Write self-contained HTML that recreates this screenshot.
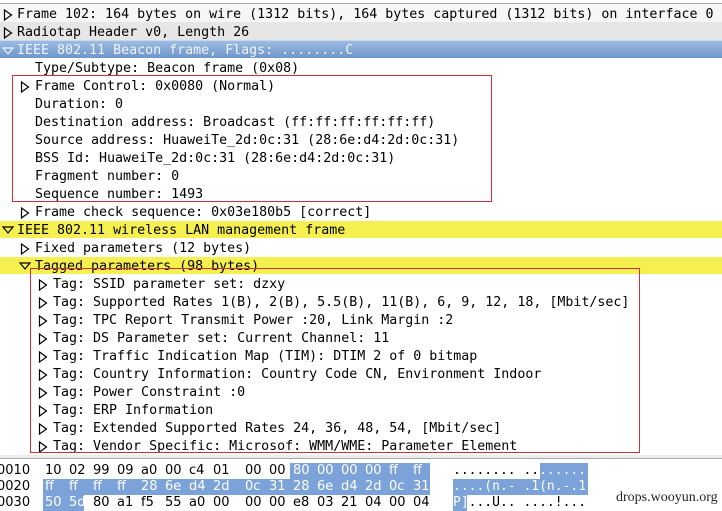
<!DOCTYPE html>
<html><head><meta charset="utf-8"><style>
*{margin:0;padding:0;box-sizing:border-box}
body{width:722px;height:510px;background:#fff;position:relative;overflow:hidden;font-family:"DejaVu Sans Mono","Liberation Mono",monospace;font-size:13.3px;color:#000}
.r{position:absolute;left:0;width:722px;height:18px;line-height:22px;white-space:pre}
.t{position:absolute;top:5px}
.box{position:absolute;border:1px solid #d0303a}
.hx{position:absolute;font-family:"DejaVu Sans",sans-serif;font-size:13px;height:16px;line-height:16px;white-space:pre}
.hx i{font-style:normal;display:inline-block;width:24px}
.hx i.g{width:32px}
.asc{position:absolute;font-family:"DejaVu Sans Mono",monospace;font-size:13px;height:16px;line-height:16px;white-space:pre}
</style></head><body>
<div style="position:absolute;left:0;top:0;width:722px;height:4px;background:#fff;border-bottom:1px solid #aaa"></div>

<div class="r" style="top:4px;background:#f6f6f6"><svg class="t" style="left:3px" width="10" height="12"><path d="M1.5 1 L8.5 6 L1.5 11 Z" fill="none" stroke="#000" stroke-width="1.2"/></svg><span style="position:absolute;left:17px">Frame 102: 164 bytes on wire (1312 bits), 164 bytes captured (1312 bits) on interface 0</span></div>
<div class="r" style="top:22px;background:#e6e6e6"><svg class="t" style="left:3px" width="10" height="12"><path d="M1.5 1 L8.5 6 L1.5 11 Z" fill="none" stroke="#000" stroke-width="1.2"/></svg><span style="position:absolute;left:17px">Radiotap Header v0, Length 26</span></div>
<div class="r" style="top:40px;background:linear-gradient(#9bbbe2,#6f96cb);color:#eef3fa;border-top:1px solid #c8d8ee"><svg class="t" style="left:2px;top:5px" width="12" height="10"><path d="M1 2 L11 2 L6 8 Z" fill="none" stroke="#eef3fa" stroke-width="1.2"/></svg><span style="position:absolute;left:17px;top:-1px">IEEE 802.11 Beacon frame, Flags: ........C</span></div>
<div class="r" style="top:58px"><span style="position:absolute;left:35px">Type/Subtype: Beacon frame (0x08)</span></div>
<div class="r" style="top:76px"><svg class="t" style="left:20px" width="10" height="12"><path d="M1.5 1 L8.5 6 L1.5 11 Z" fill="none" stroke="#000" stroke-width="1.2"/></svg><span style="position:absolute;left:35px">Frame Control: 0x0080 (Normal)</span></div>
<div class="r" style="top:94px"><span style="position:absolute;left:35px">Duration: 0</span></div>
<div class="r" style="top:112px"><span style="position:absolute;left:35px">Destination address: Broadcast (ff:ff:ff:ff:ff:ff)</span></div>
<div class="r" style="top:130px"><span style="position:absolute;left:35px">Source address: HuaweiTe_2d:0c:31 (28:6e:d4:2d:0c:31)</span></div>
<div class="r" style="top:148px"><span style="position:absolute;left:35px">BSS Id: HuaweiTe_2d:0c:31 (28:6e:d4:2d:0c:31)</span></div>
<div class="r" style="top:166px"><span style="position:absolute;left:35px">Fragment number: 0</span></div>
<div class="r" style="top:184px"><span style="position:absolute;left:35px">Sequence number: 1493</span></div>
<div class="r" style="top:202px"><svg class="t" style="left:20px" width="10" height="12"><path d="M1.5 1 L8.5 6 L1.5 11 Z" fill="none" stroke="#000" stroke-width="1.2"/></svg><span style="position:absolute;left:35px">Frame check sequence: 0x03e180b5 [correct]</span></div>
<div class="r" style="top:221px;height:17px;background:#f5ef50"><svg class="t" style="left:2px;top:4px" width="12" height="10"><path d="M1 2 L11 2 L6 8 Z" fill="none" stroke="#000" stroke-width="1.2"/></svg><span style="position:absolute;left:17px;top:-1px">IEEE 802.11 wireless LAN management frame</span></div>
<div class="r" style="top:238px"><svg class="t" style="left:20px" width="10" height="12"><path d="M1.5 1 L8.5 6 L1.5 11 Z" fill="none" stroke="#000" stroke-width="1.2"/></svg><span style="position:absolute;left:35px">Fixed parameters (12 bytes)</span></div>
<div class="r" style="top:257px;height:17px;background:#f5ef50"><svg class="t" style="left:19px;top:4px" width="12" height="10"><path d="M1 2 L11 2 L6 8 Z" fill="none" stroke="#000" stroke-width="1.2"/></svg><span style="position:absolute;left:35px;top:-1px">Tagged parameters (98 bytes)</span></div>
<div class="r" style="top:274px"><svg class="t" style="left:38px" width="10" height="12"><path d="M1.5 1 L8.5 6 L1.5 11 Z" fill="none" stroke="#000" stroke-width="1.2"/></svg><span style="position:absolute;left:53px">Tag: SSID parameter set: dzxy</span></div>
<div class="r" style="top:292px"><svg class="t" style="left:38px" width="10" height="12"><path d="M1.5 1 L8.5 6 L1.5 11 Z" fill="none" stroke="#000" stroke-width="1.2"/></svg><span style="position:absolute;left:53px">Tag: Supported Rates 1(B), 2(B), 5.5(B), 11(B), 6, 9, 12, 18, [Mbit/sec]</span></div>
<div class="r" style="top:310px"><svg class="t" style="left:38px" width="10" height="12"><path d="M1.5 1 L8.5 6 L1.5 11 Z" fill="none" stroke="#000" stroke-width="1.2"/></svg><span style="position:absolute;left:53px">Tag: TPC Report Transmit Power :20, Link Margin :2</span></div>
<div class="r" style="top:328px"><svg class="t" style="left:38px" width="10" height="12"><path d="M1.5 1 L8.5 6 L1.5 11 Z" fill="none" stroke="#000" stroke-width="1.2"/></svg><span style="position:absolute;left:53px">Tag: DS Parameter set: Current Channel: 11</span></div>
<div class="r" style="top:346px"><svg class="t" style="left:38px" width="10" height="12"><path d="M1.5 1 L8.5 6 L1.5 11 Z" fill="none" stroke="#000" stroke-width="1.2"/></svg><span style="position:absolute;left:53px">Tag: Traffic Indication Map (TIM): DTIM 2 of 0 bitmap</span></div>
<div class="r" style="top:364px"><svg class="t" style="left:38px" width="10" height="12"><path d="M1.5 1 L8.5 6 L1.5 11 Z" fill="none" stroke="#000" stroke-width="1.2"/></svg><span style="position:absolute;left:53px">Tag: Country Information: Country Code CN, Environment Indoor</span></div>
<div class="r" style="top:382px"><svg class="t" style="left:38px" width="10" height="12"><path d="M1.5 1 L8.5 6 L1.5 11 Z" fill="none" stroke="#000" stroke-width="1.2"/></svg><span style="position:absolute;left:53px">Tag: Power Constraint :0</span></div>
<div class="r" style="top:400px"><svg class="t" style="left:38px" width="10" height="12"><path d="M1.5 1 L8.5 6 L1.5 11 Z" fill="none" stroke="#000" stroke-width="1.2"/></svg><span style="position:absolute;left:53px">Tag: ERP Information</span></div>
<div class="r" style="top:418px"><svg class="t" style="left:38px" width="10" height="12"><path d="M1.5 1 L8.5 6 L1.5 11 Z" fill="none" stroke="#000" stroke-width="1.2"/></svg><span style="position:absolute;left:53px">Tag: Extended Supported Rates 24, 36, 48, 54, [Mbit/sec]</span></div>
<div class="r" style="top:436px"><svg class="t" style="left:38px" width="10" height="12"><path d="M1.5 1 L8.5 6 L1.5 11 Z" fill="none" stroke="#000" stroke-width="1.2"/></svg><span style="position:absolute;left:53px">Tag: Vendor Specific: Microsof: WMM/WME: Parameter Element</span></div>

<div class="box" style="left:12px;top:75px;width:480px;height:127px"></div>
<div class="box" style="left:30px;top:268px;width:610px;height:185px"></div>

<div style="position:absolute;left:0;top:455px;width:722px;height:4px;background:#ececec;border-bottom:1px solid #a8a8a8"></div>

<div class="hx" style="left:-3px;top:463px">0010</div>
<div class="hx" style="left:-3px;top:479px">0020</div>
<div class="hx" style="left:-3px;top:495px">0030</div>

<div style="position:absolute;left:290px;top:463px;width:140px;height:16px;background:#7ba3d9"></div>
<div style="position:absolute;left:43px;top:479px;width:387px;height:16px;background:#7ba3d9"></div>
<div style="position:absolute;left:43px;top:495px;width:41px;height:16px;background:#7ba3d9"></div>

<div class="hx" style="left:45px;top:463px"><i>10</i><i>02</i><i>99</i><i>09</i><i>a0</i><i>00</i><i>c4</i><i class="g">01</i><i>00</i><i>00</i><span style="color:#fff"><i>80</i><i>00</i><i>00</i><i>00</i><i>ff</i><i>ff</i></span></div>
<div class="hx" style="left:45px;top:479px;color:#fff"><i>ff</i><i>ff</i><i>ff</i><i>ff</i><i>28</i><i>6e</i><i>d4</i><i class="g">2d</i><i>0c</i><i>31</i><i>28</i><i>6e</i><i>d4</i><i>2d</i><i>0c</i><i>31</i></div>
<div class="hx" style="left:45px;top:495px"><span style="color:#fff"><i>50</i><i>5d</i></span><i>80</i><i>a1</i><i>f5</i><i>55</i><i>a0</i><i class="g">00</i><i>00</i><i>00</i><i>e8</i><i>03</i><i>21</i><i>04</i><i>00</i><i>04</i></div>

<div style="position:absolute;left:540px;top:463px;width:48px;height:16px;background:#7ba3d9"></div>
<div style="position:absolute;left:453px;top:479px;width:135px;height:16px;background:#7ba3d9"></div>
<div style="position:absolute;left:453px;top:495px;width:14px;height:16px;background:#7ba3d9"></div>
<div class="asc" style="left:453px;top:463px">........ ..<span style="color:#fff">......</span></div>
<div class="asc" style="left:453px;top:479px;color:#fff">....(n.- .1(n.-.1</div>
<div class="asc" style="left:453px;top:495px"><span style="color:#fff">P]</span>...U.. ....!...</div>

<div style="position:absolute;left:616px;top:490px;font-family:'Liberation Serif',serif;font-size:14px;color:#222">drops.wooyun.org</div>
</body></html>
